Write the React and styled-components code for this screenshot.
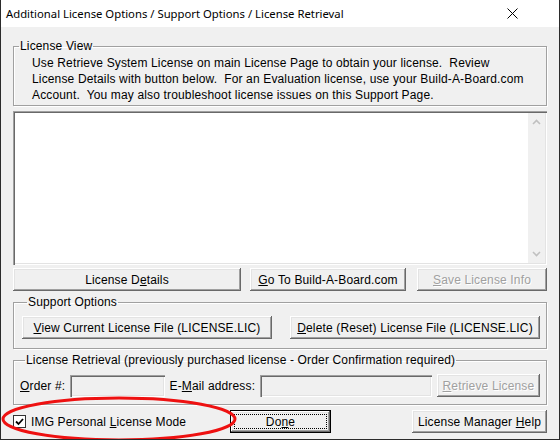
import React from 'react';
import styled, { createGlobalStyle, css } from 'styled-components';

const GlobalStyle = createGlobalStyle`
body {
  margin:0;
  background:#f0f0f0;
}
* {
  box-sizing:border-box;
}
`;

const Window = styled.div`
position:relative;
width:560px;
height:440px;
display:flex;
flex-direction:column;
background:#f0f0f0;
border:1px solid #2b2b2b;
border-top:none;
font-family:"Liberation Sans", Arial, sans-serif;
font-size:12px;
letter-spacing:0.15px;
color:#000;
overflow:hidden;
`;
const TitleBar = styled.div`
height:27px;
flex:none;
display:flex;
align-items:center;
justify-content:space-between;
background:#fff;
padding:0 0 0 5px;
font-family:"Noto Sans", sans-serif;
font-size:11.3px;
letter-spacing:0;
`;
const CloseBox = styled.div`
width:46px;
height:27px;
display:flex;
align-items:center;
justify-content:center;
margin-right:24px;
`;
const Body = styled.div`
flex:1;
display:flex;
flex-direction:column;
padding:0 12px 0 12px;
`;
const Group = styled.fieldset`
margin:${p => p.$top}px 0 0 0;
padding:${p => p.$pad};
border:1px solid #a0a0a0;
box-shadow:inset 1px 1px 0 #fff, 1px 1px 0 #fff;
min-width:0;
`;
const Legend = styled.legend`
margin-left:5px;
padding:0 1px;
line-height:14px;
`;
const Info = styled.div`
line-height:16px;
padding-left:18px;
`;
const TextArea = styled.div`
margin-top:5px;
height:154px;
display:flex;
justify-content:flex-end;
background:#fff;
padding:2px;
box-shadow:inset 1px 1px 0 #a0a0a0, inset 2px 2px 0 #696969, inset -1px -1px 0 #fff, inset -2px -2px 0 #e3e3e3;
`;
const ScrollBar = styled.div`
width:17px;
background:#f0f0f0;
display:flex;
flex-direction:column;
justify-content:space-between;
align-items:center;
padding:6px 0;
`;
const Row = styled.div`
display:flex;
align-items:center;
margin-top:${p => p.$top || 0}px;
`;
const raised = css`
box-shadow:inset -1px -1px 0 #696969, inset 1px 1px 0 #fff, inset -2px -2px 0 #a0a0a0, inset 2px 2px 0 #e3e3e3;
`;
const Button = styled.button`
width:${p => p.$w}px;
height:23px;
margin-left:${p => p.$ml || 0}px;
border:none;
background:#f0f0f0;
font-family:"Liberation Sans", Arial, sans-serif;
font-size:12px;
letter-spacing:0.15px;
color:${p => (p.disabled ? '#a0a0a0' : '#000')};
text-shadow:${p => (p.disabled ? '1px 1px 0 #fff' : 'none')};
padding:0;
${raised}
`;
const DefaultButton = styled(Button)`
position:relative;
border:1px solid #000;
&::after {
  content:'';
  position:absolute;
  inset:3px;
  border:1px dotted #000;
}
`;
const Label = styled.span`
margin-left:${p => p.$ml || 0}px;
white-space:nowrap;
`;
const Field = styled.div`
width:${p => p.$w}px;
height:22px;
margin-left:${p => p.$ml || 0}px;
background:#f0f0f0;
box-shadow:inset 1px 1px 0 #a0a0a0, inset 2px 2px 0 #696969, inset -1px -1px 0 #fff, inset -2px -2px 0 #e3e3e3;
`;
const BottomRow = styled.div`
display:flex;
align-items:center;
margin-top:5px;
`;
const CheckWrap = styled.div`
width:217px;
display:flex;
align-items:center;
gap:5px;
`;
const CheckBox = styled.span`
width:13px;
height:13px;
display:flex;
align-items:center;
justify-content:center;
background:#fff;
border:1px solid #333;
`;
const Spacer = styled.div`
flex:1;
`;
const Annotation = styled.svg`
position:absolute;
left:0;
top:395px;
pointer-events:none;
`;

const Chevron = ({ up }) => (
  <svg width="9" height="6" viewBox="0 0 9 6">
    <path d={up ? 'M1 5 L4.5 1.5 L8 5' : 'M1 1 L4.5 4.5 L8 1'} fill="none" stroke="#c0c0c0" strokeWidth="1.6" />
  </svg>
);

const App = () => (
  <>
    <GlobalStyle />
    <Window>
      <TitleBar>
        <span>Additional License Options / Support Options / License Retrieval</span>
        <CloseBox>
          <svg width="11" height="11" viewBox="0 0 11 11">
            <path d="M0.5 0.5 L10.5 10.5 M10.5 0.5 L0.5 10.5" stroke="#000" strokeWidth="1" />
          </svg>
        </CloseBox>
      </TitleBar>
      <Body>
        <Group $top={12} $pad="2px 0 2px 0">
          <Legend>License View</Legend>
          <Info>
            Use Retrieve System License on main License Page to obtain your license.&nbsp; Review<br />
            License Details with button below.&nbsp; For an Evaluation license, use your Build-A-Board.com<br />
            Account.&nbsp; You may also troubleshoot license issues on this Support Page.
          </Info>
        </Group>
        <TextArea>
          <ScrollBar>
            <Chevron up />
            <Chevron />
          </ScrollBar>
        </TextArea>
        <Row $top={3}>
          <Button $w={228}>License D<u>e</u>tails</Button>
          <Button $w={156} $ml={9}><u>G</u>o To Build-A-Board.com</Button>
          <Button $w={130} $ml={11} disabled><u>S</u>ave License Info</Button>
        </Row>
        <Group $top={4} $pad="7px 6px 9px 8px">
          <Legend>Support Options</Legend>
          <Row>
            <Button $w={250}><u>V</u>iew Current License File (LICENSE.LIC)</Button>
            <Button $w={250} $ml={18}><u>D</u>elete (Reset) License File (LICENSE.LIC)</Button>
          </Row>
        </Group>
        <Group $top={4} $pad="7px 6px 7px 6px">
          <Legend>License Retrieval (previously purchased license - Order Confirmation required)</Legend>
          <Row>
            <Label><u>O</u>rder #:</Label>
            <Field $w={96} $ml={5} />
            <Label $ml={4}>E-<u>M</u>ail address:</Label>
            <Field $w={173} $ml={5} />
            <Button $w={104} $ml={5} disabled><u>R</u>etrieve License</Button>
          </Row>
        </Group>
        <BottomRow>
          <CheckWrap>
            <CheckBox>
              <svg width="9" height="8" viewBox="0 0 9 8">
                <path d="M1 3.5 L3.5 6 L8 1" fill="none" stroke="#000" strokeWidth="1.8" />
              </svg>
            </CheckBox>
            <span>IMG Personal <u>L</u>icense Mode</span>
          </CheckWrap>
          <DefaultButton $w={101}>Do<u>n</u>e</DefaultButton>
          <Spacer />
          <Button $w={135}>License Manager <u>H</u>elp</Button>
        </BottomRow>
      </Body>
      <Annotation width="245" height="50" viewBox="0 0 245 50">
        <ellipse cx="118" cy="24" rx="116" ry="21" fill="none" stroke="#ee1111" strokeWidth="3" />
      </Annotation>
    </Window>
  </>
);

export default App;
